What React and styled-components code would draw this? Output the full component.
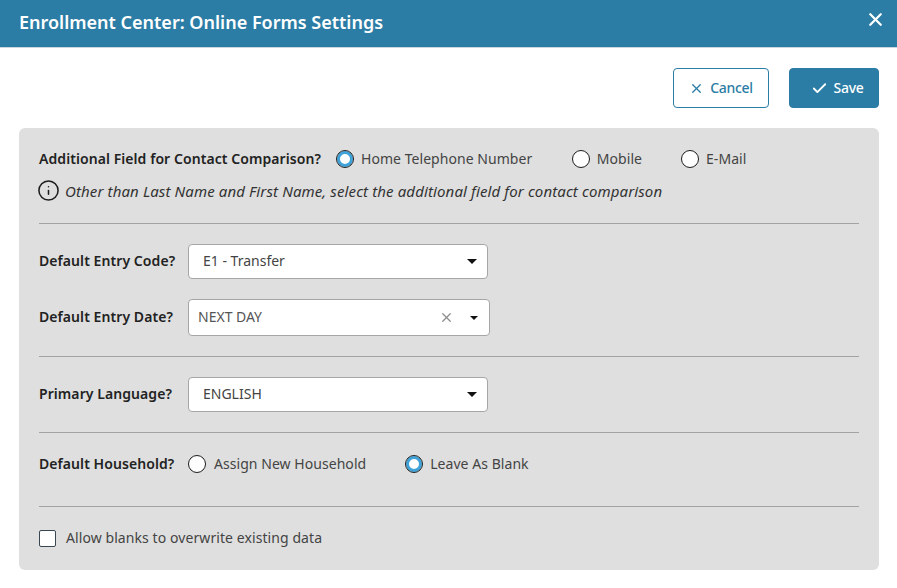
import styled, { createGlobalStyle } from "styled-components";
import { X, Check, Info } from "lucide-react";

const GlobalStyle = createGlobalStyle`
  html, body {
    margin: 0;
    padding: 0;
    background: #fff;
    font-family: "Noto Sans", "Open Sans", sans-serif;
    font-size: 14px;
  }
  * { box-sizing: border-box; }
`;

const Page = styled.div`
  width: 897px;
  height: 588px;
  overflow: hidden;
  background: #fff;
`;
const Header = styled.header`
  height: 48px;
  background: #2b7da5;
  border-bottom: 1px solid #c9d6dd;
  display: flex;
  align-items: center;
  justify-content: space-between;
  padding: 0 11px 0 19px;
  color: #fff;
`;
const Title = styled.h1`
  margin: 0 0 3px;
  font-size: 18px;
  font-weight: 600;
  line-height: 44px;
`;
const CloseButton = styled.button`
  border: 0;
  background: none;
  color: #fff;
  padding: 0;
  display: flex;
  margin-bottom: 9px;
`;
const Toolbar = styled.div`
  display: flex;
  justify-content: flex-end;
  gap: 20px;
  padding: 20px 18px 20px 0;
`;
const Button = styled.button`
  height: 40px;
  width: ${(p) => p.$width}px;
  border-radius: 4px;
  border: 1px solid #2b7da5;
  background: ${(p) => (p.$primary ? "#2b7da5" : "#fff")};
  color: ${(p) => (p.$primary ? "#fff" : "#2b7da5")};
  font-family: inherit;
  font-size: 14px;
  font-weight: 500;
  letter-spacing: -0.3px;
  display: flex;
  align-items: center;
  justify-content: center;
  gap: 6px;
  padding: 0 0 0 ${(p) => (p.$primary ? 6 : 0)}px;
`;
const ButtonText = styled.span`
  padding-bottom: 2px;
`;
const Panel = styled.section`
  margin: 0 18px 0 19px;
  height: 442px;
  background: #dfdfdf;
  border-radius: 6px;
  padding: 0 20px;
`;
const Section = styled.div`
  height: ${(p) => p.$height}px;
  padding-top: ${(p) => p.$top || 0}px;
  border-bottom: ${(p) => (p.$last ? "0" : "1px solid #a3a3a3")};
`;
const Row = styled.div`
  display: flex;
  align-items: center;
  height: ${(p) => p.$height || 22}px;
  margin-bottom: ${(p) => p.$bottom || 0}px;
`;
const Label = styled.label`
  width: ${(p) => (p.$width ? p.$width + "px" : "auto")};
  padding-bottom: 2px;
  font-weight: 600;
  font-size: 14px;
  letter-spacing: 0.07px;
  color: #222;
  white-space: nowrap;
  flex-shrink: 0;
`;
const RadioOption = styled.span`
  display: inline-flex;
  align-items: center;
  gap: ${(p) => p.$gap || 7}px;
  margin-left: ${(p) => p.$left || 0}px;
  font-size: 14px;
  letter-spacing: 0.05px;
  color: #444;
  white-space: nowrap;
`;
const RadioText = styled.span`
  padding-bottom: 2px;
`;
const RadioCircle = styled.span`
  width: 18px;
  height: 18px;
  border-radius: 50%;
  border: 1.5px solid #1c1c1c;
  background: #fff;
  flex-shrink: 0;
  ${(p) => p.$checked && `box-shadow: inset 0 0 0 3px #3fa2d9;`}
`;
const Hint = styled.div`
  display: flex;
  align-items: center;
  gap: 5px;
  font-style: italic;
  font-size: 15px;
  letter-spacing: 0.12px;
  color: #333;
  svg {
    flex-shrink: 0;
    color: #1c1c1c;
    margin: -1px 0 -1px -2px;
  }
`;
const SelectBox = styled.div`
  width: ${(p) => p.$width}px;
  height: ${(p) => p.$height}px;
  background: #fff;
  border: 1px solid #a6a6a6;
  border-radius: 4px;
  display: flex;
  align-items: center;
  padding: 0 ${(p) => p.$right}px 0 ${(p) => p.$left}px;
  font-size: 14px;
  color: #444;
`;
const SelectText = styled.span`
  flex: 1;
  padding-bottom: 2px;
  color: ${(p) => p.$color || "#444"};
`;
const Caret = styled.span`
  width: 0;
  height: 0;
  border-left: ${(p) => p.$size}px solid transparent;
  border-right: ${(p) => p.$size}px solid transparent;
  border-top: ${(p) => p.$size}px solid #111;
  margin-left: ${(p) => p.$left || 0}px;
`;
const ClearIcon = styled(X)`
  color: #8c8c8c;
`;
const Checkbox = styled.span`
  width: 17px;
  height: 17px;
  background: #fff;
  border: 1px solid #3a4750;
  border-radius: 2px;
  margin-right: 10px;
`;
const CheckLabel = styled.span`
  padding-bottom: 2px;
  font-size: 14px;
  letter-spacing: 0.08px;
  color: #444;
`;

export default function App() {
  return (
    <Page>
      <GlobalStyle />
      <Header>
        <Title>Enrollment Center: Online Forms Settings</Title>
        <CloseButton aria-label="Close">
          <X size={21} strokeWidth={2.6} />
        </CloseButton>
      </Header>
      <Toolbar>
        <Button $width={96}>
          <X size={15} strokeWidth={2.2} />
          <ButtonText>Cancel</ButtonText>
        </Button>
        <Button $primary $width={90}>
          <Check size={17} strokeWidth={2.6} />
          <ButtonText>Save</ButtonText>
        </Button>
      </Toolbar>
      <Panel>
        <Section $height={96} $top={20}>
          <Row $bottom={10}>
            <Label>Additional Field for Contact Comparison?</Label>
            <RadioOption $left={15}>
              <RadioCircle $checked />
              <RadioText>Home Telephone Number</RadioText>
            </RadioOption>
            <RadioOption $left={39.5}>
              <RadioCircle />
              <RadioText>Mobile</RadioText>
            </RadioOption>
            <RadioOption $left={39}>
              <RadioCircle />
              <RadioText>E-Mail</RadioText>
            </RadioOption>
          </Row>
          <Hint>
            <Info size={23} strokeWidth={1.6} />
            Other than Last Name and First Name, select the additional field for contact comparison
          </Hint>
        </Section>
        <Section $height={133} $top={20}>
          <Row $height={35} $bottom={20}>
            <Label $width={149}>Default Entry Code?</Label>
            <SelectBox $width={300} $height={35} $left={14} $right={10}>
              <SelectText>E1 - Transfer</SelectText>
              <Caret $size={5} />
            </SelectBox>
          </Row>
          <Row $height={37}>
            <Label $width={149}>Default Entry Date?</Label>
            <SelectBox $width={302} $height={37} $left={9} $right={11}>
              <SelectText $color="#555">NEXT DAY</SelectText>
              <ClearIcon size={15} strokeWidth={2} />
              <Caret $size={4} $left={16} />
            </SelectBox>
          </Row>
        </Section>
        <Section $height={76} $top={20}>
          <Row $height={35}>
            <Label $width={149}>Primary Language?</Label>
            <SelectBox $width={300} $height={35} $left={14} $right={10}>
              <SelectText>ENGLISH</SelectText>
              <Caret $size={5} />
            </SelectBox>
          </Row>
        </Section>
        <Section $height={74} $top={20}>
          <Row>
            <Label $width={149}>Default Household?</Label>
            <RadioOption $gap={8}>
              <RadioCircle />
              <RadioText>Assign New Household</RadioText>
            </RadioOption>
            <RadioOption $left={39}>
              <RadioCircle $checked />
              <RadioText>Leave As Blank</RadioText>
            </RadioOption>
          </Row>
        </Section>
        <Section $height={63} $top={20} $last>
          <Row>
            <Checkbox />
            <CheckLabel>Allow blanks to overwrite existing data</CheckLabel>
          </Row>
        </Section>
      </Panel>
    </Page>
  );
}
